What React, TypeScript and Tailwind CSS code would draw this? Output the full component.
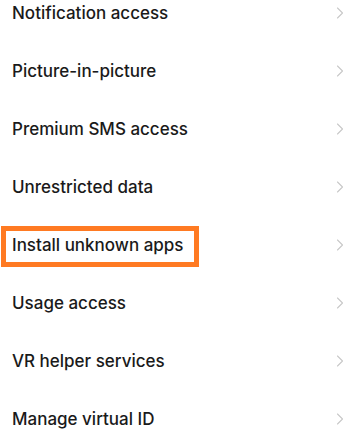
import React from "react";

const items = [
  "Notification access",
  "Picture-in-picture",
  "Premium SMS access",
  "Unrestricted data",
  "Install unknown apps",
  "Usage access",
  "VR helper services",
  "Manage virtual ID",
];

function Chevron() {
  return (
    <svg width="8" height="12" viewBox="0 0 8 12" fill="none" className="shrink-0">
      <path d="M1.5 1 L6.5 6 L1.5 11" stroke="#c8c8c8" strokeWidth="1.1" strokeLinecap="round" strokeLinejoin="round" />
    </svg>
  );
}

export default function App() {
  return (
    <div className="w-[364px] h-[435px] overflow-hidden bg-white" style={{ fontFamily: "Inter, 'Noto Sans', sans-serif" }}>
      <div className="-mt-[16px] flex flex-col">
        {items.map((label) => (
          <div key={label} className="relative h-[58px] flex items-center justify-between pl-[12px] pr-[20px]">
            <span className="text-[17px] leading-none font-medium text-[#1a1a1a]">{label}</span>
            <Chevron />
            {label === "Install unknown apps" && (
              <div className="absolute left-[1px] top-[10px] w-[198px] h-[41px] border-[5px] border-[#ff7a22]" />
            )}
          </div>
        ))}
      </div>
    </div>
  );
}
